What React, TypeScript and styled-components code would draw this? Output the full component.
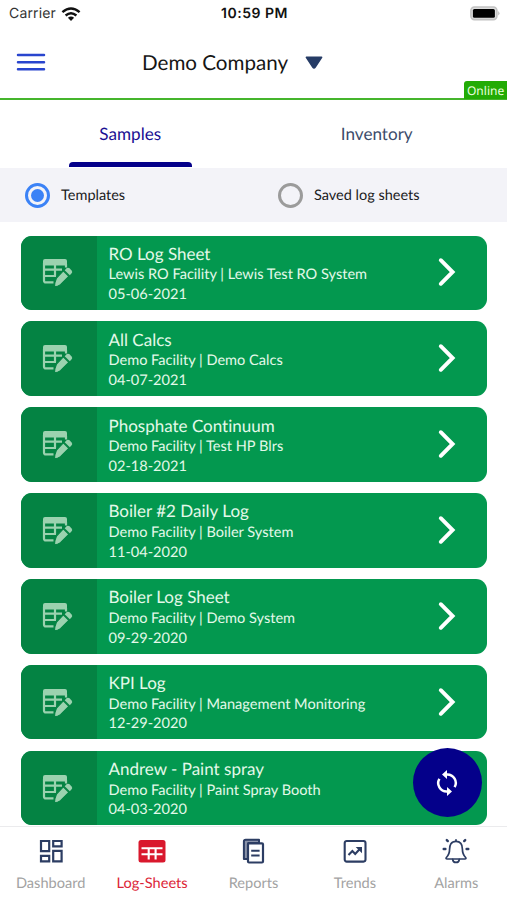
import React from "react";
import styled, { createGlobalStyle } from "styled-components";

const GlobalStyle = createGlobalStyle`
  * { box-sizing: border-box; }
  body {
    margin: 0;
    background: #fff;
    font-family: Lato, sans-serif;
    font-variant-ligatures: none;
    text-rendering: geometricPrecision;
    overflow: hidden;
  }
`;

const Screen = styled.div`
  position: relative;
  display: flex;
  flex-direction: column;
  width: 507px;
  height: 900px;
  overflow: hidden;
  background: #fff;
`;

const StatusBar = styled.div`
  display: grid;
  grid-template-columns: 1fr auto 1fr;
  align-items: center;
  height: 27px;
  padding: 0 7px 0 9px;
  font-family: Inter, sans-serif;
  color: #111;
  svg { display: block; }
`;

const Carrier = styled.div`
  display: flex;
  align-items: center;
  gap: 5px;
  font-size: 14px;
  line-height: 18px;
  padding-top: 1px;
  letter-spacing: 0.15px;
  color: #333;
`;

const Clock = styled.div`
  padding-top: 1px;
  font-size: 14px;
  line-height: 18px;
  font-weight: 600;
  letter-spacing: 0.5px;
`;

const Battery = styled.div`
  justify-self: end;
`;

const Header = styled.header`
  position: relative;
  display: flex;
  align-items: center;
  height: 73px;
  padding: 0 0 1px 16px;
  border-bottom: 2px solid #45b52c;
  svg { display: block; }
`;

const CompanyPicker = styled.div`
  display: flex;
  align-items: center;
  gap: 17px;
  margin-left: 96px;
  padding-top: 1px;
  font-size: 20.6px;
  line-height: 26px;
  color: #161616;
`;

const OnlineBadge = styled.div`
  position: absolute;
  right: 0;
  bottom: -1px;
  width: 43px;
  height: 18px;
  padding-left: 3px;
  border-top-left-radius: 3px;
  background: #22ab05;
  color: #eaffdf;
  font: 12px/19px "Noto Sans", sans-serif;
`;

const Tabs = styled.div`
  display: flex;
  height: 68px;
  padding: 0 7px;
`;

const Tab = styled.div<{ $active?: boolean }>`
  display: flex;
  flex: 1;
  flex-direction: column;
  align-items: center;
  justify-content: space-between;
  padding: 22px 0 1px;
  font-size: 17.1px;
  line-height: 23px;
  color: ${(p) => (p.$active ? "#1a0f93" : "#3c4c6b")};
  &::after {
    content: "";
    width: 123px;
    height: 5px;
    border-radius: 4px 4px 0 0;
    background: ${(p) => (p.$active ? "#04008a" : "transparent")};
  }
`;

const Filters = styled.div`
  display: grid;
  grid-template-columns: 253px 1fr;
  align-items: center;
  height: 54px;
  padding-left: 25px;
  background: #f3f3f8;
`;

const FilterOption = styled.div`
  display: flex;
  align-items: center;
  gap: 11px;
  font-size: 14.5px;
  color: #1b1b1d;
`;

const Radio = styled.span<{ $on?: boolean }>`
  display: grid;
  place-items: center;
  width: 25px;
  height: 25px;
  border: 3px solid ${(p) => (p.$on ? "#3b82f6" : "#9b9b9b")};
  border-radius: 50%;
  &::after {
    content: "";
    width: 13px;
    height: 13px;
    border-radius: 50%;
    background: ${(p) => (p.$on ? "#3b82f6" : "transparent")};
  }
`;

const List = styled.main`
  display: flex;
  flex: 1;
  flex-direction: column;
  gap: 11.5px;
  min-height: 0;
  padding: 13.6px 19.7px 0 20.5px;
  overflow: hidden;
`;

const Card = styled.article`
  display: flex;
  flex: none;
  align-items: stretch;
  height: 74.4px;
  border-radius: 11px;
  overflow: hidden;
  background: #03984f;
`;

const CardIcon = styled.div`
  display: grid;
  place-items: center;
  width: 76px;
  padding: 1px 3px 0 0;
  background: #048343;
`;

const CardBody = styled.div`
  flex: 1;
  padding: 7.2px 0 0 12px;
  color: #e3f9e9;
  white-space: nowrap;
`;

const CardTitle = styled.div`
  margin-bottom: 1.6px;
  font-size: 17px;
  line-height: 21px;
`;

const CardLine = styled.div`
  font-size: 14.57px;
  line-height: 19.6px;
`;

const CardArrow = styled.div`
  display: grid;
  place-items: center;
  width: 80px;
  padding-bottom: 1px;
`;

const SyncButton = styled.button`
  position: absolute;
  left: 413px;
  top: 748px;
  display: grid;
  place-items: center;
  width: 69px;
  height: 69px;
  padding: 0 1px 0 0;
  border: 0;
  border-radius: 50%;
  background: #04008a;
`;

const BottomNav = styled.nav`
  display: grid;
  grid-template-columns: repeat(5, 1fr);
  height: 74px;
  border-top: 1px solid #ebebed;
  background: #fff;
`;

const NavItem = styled.div<{ $active?: boolean }>`
  display: flex;
  flex-direction: column;
  align-items: center;
  padding-top: 10px;
  font-size: 14.6px;
  line-height: 18px;
  gap: 10px;
  color: ${(p) => (p.$active ? "#dc2638" : "#a3a3a3")};
`;

const WifiIcon = () => (
  <svg width="20" height="15" viewBox="0 0 20 15">
    <g fill="none" stroke="#111" strokeWidth="2.4">
      <path d="M1.4 5.2Q10-2.1 18.6 5.2" />
      <path d="M4.6 8.5Q10 3.9 15.4 8.5" />
    </g>
    <path d="M6.9 10.8Q10 8.3 13.1 10.8L10 14Z" fill="#111" />
  </svg>
);

const BatteryIcon = () => (
  <svg width="30" height="15" viewBox="0 0 30 15">
    <rect x="0.9" y="1" width="26" height="12.6" rx="3.5" fill="#ddd" stroke="#c2c2c2" strokeWidth="1.6" />
    <rect x="2.9" y="2.9" width="22" height="8.8" rx="1.5" fill="#000" />
    <path d="M28.4 5q2 2.3 0 4.6z" fill="#aaa" />
  </svg>
);

const MenuIcon = () => (
  <svg width="30" height="20" viewBox="0 0 30 20">
    <path d="M2 3h26M2 10.2h26M2 17.2h26" stroke="#2945ce" strokeWidth="2.5" strokeLinecap="round" />
  </svg>
);

const CaretIcon = () => (
  <svg width="18" height="13" viewBox="0 0 18 13">
    <path d="M1.4 1.4H16.6L10.2 11Q9 12.8 7.8 11Z" fill="#263c66" stroke="#263c66" strokeWidth="1.6" strokeLinejoin="round" />
  </svg>
);

const SheetEditIcon = () => (
  <svg width="31" height="30" viewBox="0 0 31 30">
    <g fill="none" stroke="#9bd2af" strokeWidth="2.2">
      <path d="M11.5 24.4H4Q2 24.4 2 22.4V5" />
      <path d="M2 11.7H20M2 18H14M13 7V18" />
      <path d="M24 6V9.5" />
    </g>
    <path d="M1 7.4V3Q1 1 3 1H23Q25 1 25 3V7.4Z" fill="#9bd2af" />
    <path d="M21.3 12.8L26.8 18.3L18.5 26.6Q16 28.5 12.5 28.9Q12.3 25 14.5 20Z" fill="#9bd2af" stroke="#048343" strokeWidth="1.1" />
    <path d="M22.7 12.2L24.8 10.1Q26.2 9.1 27.6 10.3L29.6 12.4Q30.8 13.9 29.8 15.1L27.8 17.2Z" fill="#9bd2af" />
  </svg>
);

const ChevronIcon = () => (
  <svg width="18" height="30" viewBox="0 0 18 30">
    <path d="M2.8 3.2L14.6 15L2.8 26.8" fill="none" stroke="#fff" strokeWidth="3.9" strokeLinecap="round" strokeLinejoin="miter" />
  </svg>
);

const SyncIcon = () => (
  <svg width="22" height="28" viewBox="0 0 22 28">
    <g fill="none" stroke="#fff" strokeWidth="2.5">
      <path d="M8.5 5.4H11A8.5 8.5 0 0 1 18.6 18.2" />
      <path d="M13.5 22.6H11A8.5 8.5 0 0 1 3.4 9.8" />
    </g>
    <path d="M11 1V10L6 5.4ZM11 18V27L16 22.6Z" fill="#fff" />
  </svg>
);

const DashboardIcon = () => (
  <svg width="28" height="28" viewBox="0 0 28 28">
    <g fill="none" stroke="#2c3d63" strokeWidth="2.2">
      <path d="M4 4H12.2V14.2H4ZM16.2 4H24.6V9.4H16.2ZM4 18.8H12.2V24.4H4ZM16.2 13.8H24.6V24.4H16.2Z" />
    </g>
  </svg>
);

const LogSheetsIcon = () => (
  <svg width="28" height="28" viewBox="0 0 28 28">
    <rect x="0.5" y="3" width="27" height="22.5" rx="2.5" fill="#d9182d" />
    <path d="M3.5 11.2H24.5M3.5 17.3H24.5M10.7 11.2V22.5M17.6 11.2V22.5" stroke="#fff" strokeWidth="2.1" />
  </svg>
);

const ReportsIcon = () => (
  <svg width="28" height="28" viewBox="0 0 28 28">
    <path d="M4.9 22V4.5Q4.9 2.8 6.7 2.8H20V6H9.3V22Z" fill="#8992a8" stroke="#2c3d63" strokeWidth="2" strokeLinejoin="round" />
    <rect x="9" y="6.3" width="15" height="19.2" rx="1" fill="#fff" stroke="#2c3d63" strokeWidth="2.2" />
    <path d="M12.2 13.8H20.6M12.2 18.6H20.6" stroke="#2c3d63" strokeWidth="2" />
  </svg>
);

const TrendsIcon = () => (
  <svg width="28" height="28" viewBox="0 0 28 28">
    <rect x="3.7" y="4" width="20.8" height="20.6" rx="2" fill="none" stroke="#2c3d63" strokeWidth="2.1" />
    <path d="M7.5 18L11.4 14L14.2 17L19 11.8" fill="none" stroke="#2c3d63" strokeWidth="2.1" />
    <path d="M14.7 9.9H21V16.2Z" fill="#2c3d63" />
  </svg>
);

const AlarmsIcon = () => (
  <svg width="28" height="28" viewBox="0 0 28 28">
    <g fill="none" stroke="#2c3d63" strokeWidth="1.7" strokeLinecap="round" strokeLinejoin="round">
      <path d="M14 4.3C9 4.3 7.6 8 7.6 12.1C7.6 17 6.5 18.5 4.4 20.5Q3.4 21.9 5.2 22H22.8Q24.6 21.9 23.6 20.5C21.5 18.5 20.4 17 20.4 12.1C20.4 8 19 4.3 14 4.3Z" />
      <path d="M10.7 22.3Q11 25.4 14 25.4Q17 25.4 17.3 22.3M14 2.8V4" />
      <path d="M1.7 12H3.4M24.6 12H26.3M4.8 3.1L5.8 4.1M23.2 3.1L22.2 4.1" strokeWidth="2.4" />
    </g>
  </svg>
);

const sheets = [
  ["RO Log Sheet", "Lewis RO Facility | Lewis Test RO System", "05-06-2021"],
  ["All Calcs", "Demo Facility | Demo Calcs", "04-07-2021"],
  ["Phosphate Continuum", "Demo Facility | Test HP Blrs", "02-18-2021"],
  ["Boiler #2 Daily Log", "Demo Facility | Boiler System", "11-04-2020"],
  ["Boiler Log Sheet", "Demo Facility | Demo System", "09-29-2020"],
  ["KPI Log", "Demo Facility | Management Monitoring", "12-29-2020"],
  ["Andrew - Paint spray", "Demo Facility | Paint Spray Booth", "04-03-2020"],
];

const navItems = [
  { label: "Dashboard", Icon: DashboardIcon },
  { label: "Log-Sheets", Icon: LogSheetsIcon, active: true },
  { label: "Reports", Icon: ReportsIcon },
  { label: "Trends", Icon: TrendsIcon },
  { label: "Alarms", Icon: AlarmsIcon },
];

export default function App() {
  return (
    <>
      <GlobalStyle />
      <Screen>
        <StatusBar>
          <Carrier>Carrier <WifiIcon /></Carrier>
          <Clock>10:59 PM</Clock>
          <Battery><BatteryIcon /></Battery>
        </StatusBar>
        <Header>
          <MenuIcon />
          <CompanyPicker>Demo Company <CaretIcon /></CompanyPicker>
          <OnlineBadge>Online</OnlineBadge>
        </Header>
        <Tabs>
          <Tab $active>Samples</Tab>
          <Tab>Inventory</Tab>
        </Tabs>
        <Filters>
          <FilterOption><Radio $on />Templates</FilterOption>
          <FilterOption><Radio />Saved log sheets</FilterOption>
        </Filters>
        <List>
          {sheets.map(([title, place, date]) => (
            <Card key={title}>
              <CardIcon><SheetEditIcon /></CardIcon>
              <CardBody>
                <CardTitle>{title}</CardTitle>
                <CardLine>{place}</CardLine>
                <CardLine>{date}</CardLine>
              </CardBody>
              <CardArrow><ChevronIcon /></CardArrow>
            </Card>
          ))}
        </List>
        <SyncButton aria-label="Sync"><SyncIcon /></SyncButton>
        <BottomNav>
          {navItems.map(({ label, Icon, active }) => (
            <NavItem key={label} $active={active}><Icon />{label}</NavItem>
          ))}
        </BottomNav>
      </Screen>
    </>
  );
}
